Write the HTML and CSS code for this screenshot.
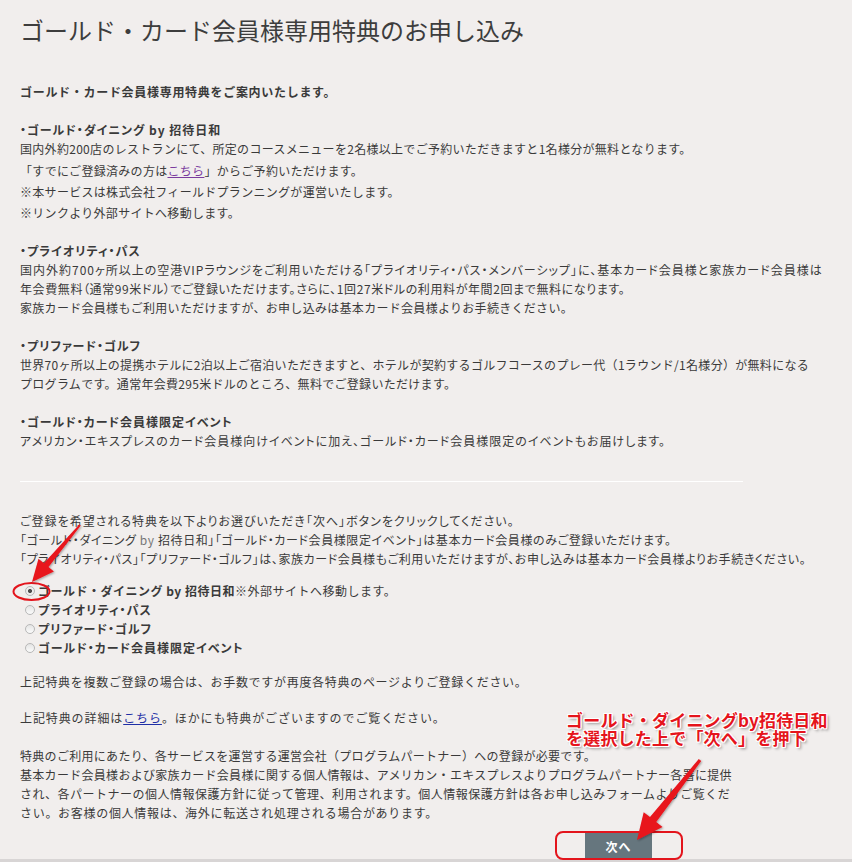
FILE: index.html
```html
<!DOCTYPE html>
<html lang="ja">
<head>
<meta charset="utf-8">
<title>ゴールド・カード会員様専用特典のお申し込み</title>
<link rel="stylesheet" href="styles.css">
</head>
<body>
<main class="page">
  <h1 class="title">ゴールド・カード会員様専用特典のお申し込み</h1>
  <p class="intro wide">ゴールド・カード会員様専用特典をご案内いたします。</p>

  <section class="benefit benefit-first">
    <h2 class="benefit-title">・ゴールド・ダイニング by 招待日和</h2>
    <p class="text">国内外約200店のレストランにて、所定のコースメニューを2名様以上でご予約いただきますと1名様分が無料となります。</p>
    <p class="text text-loose">「すでにご登録済みの方は<a class="link link-visited" href="#">こちら</a>」からご予約いただけます。<br>※本サービスは株式会社フィールドプランニングが運営いたします。<br>※リンクより外部サイトへ移動します。</p>
  </section>

  <section class="benefit benefit-second">
    <h2 class="benefit-title">・プライオリティ・パス</h2>
    <p class="text"><span class="tight-wide">国内外約700ヶ所以上の空港VIPラウンジをご利用いただける「プライオリティ・パス・メンバーシップ」に、基本カード会員様と家族カード会員様は</span><br><span class="tight">年会費無料（通常99米ドル）でご登録いただけます。さらに、1回27米ドルの利用料が年間2回まで無料になります。</span><br>家族カード会員様もご利用いただけますが、お申し込みは基本カード会員様よりお手続きください。</p>
  </section>

  <section class="benefit">
    <h2 class="benefit-title">・プリファード・ゴルフ</h2>
    <p class="text">世界70ヶ所以上の提携ホテルに2泊以上ご宿泊いただきますと、ホテルが契約するゴルフコースのプレー代（1ラウンド/1名様分）が無料になる<br>プログラムです。通常年会費295米ドルのところ、無料でご登録いただけます。</p>
  </section>

  <section class="benefit">
    <h2 class="benefit-title">・ゴールド・カード会員様限定イベント</h2>
    <p class="text tight-wide">アメリカン・エキスプレスのカード会員様向けイベントに加え、ゴールド・カード会員様限定のイベントもお届けします。</p>
  </section>

  <hr class="divider">

  <form class="apply">
    <p class="text guide"><span class="tight-wide">ご登録を希望される特典を以下よりお選びいただき「次へ」ボタンをクリックしてください。</span><br><span class="tight">「ゴールド・ダイニング <span class="faint">by</span> 招待日和」「ゴールド・カード会員様限定イベント」は基本カード会員様のみご登録いただけます。</span><br><span class="tight">「プライオリティ・パス」「プリファード・ゴルフ」は、家族カード会員様もご利用いただけますが、お申し込みは基本カード会員様よりお手続きください。</span></p>

    <ul class="options">
      <li class="option"><input class="radio" type="radio" name="benefit" id="b1" checked><label for="b1"><b>ゴールド・ダイニング by 招待日和</b>※外部サイトへ移動します。</label></li>
      <li class="option tight-wide"><input class="radio" type="radio" name="benefit" id="b2"><label for="b2"><b>プライオリティ・パス</b></label></li>
      <li class="option tight-wide"><input class="radio" type="radio" name="benefit" id="b3"><label for="b3"><b>プリファード・ゴルフ</b></label></li>
      <li class="option tight-wide"><input class="radio" type="radio" name="benefit" id="b4"><label for="b4"><b>ゴールド・カード会員様限定イベント</b></label></li>
    </ul>

    <p class="text note-first wide">上記特典を複数ご登録の場合は、お手数ですが再度各特典のページよりご登録ください。</p>
    <p class="text note-second wider">上記特典の詳細は<a class="link" href="#">こちら</a>。ほかにも特典がございますのでご覧ください。</p>
    <p class="text legal">特典のご利用にあたり、各サービスを運営する運営会社（プログラムパートナー）への登録が必要です。<br>基本カード会員様および家族カード会員様に関する個人情報は、アメリカン・エキスプレスよりプログラムパートナー各署に提供<br><span class="wide-soft">され、各パートナーの個人情報保護方針に従って管理、利用されます。個人情報保護方針は各お申し込みフォームよりご覧くだ</span><br><span class="wide">さい。お客様の個人情報は、海外に転送され処理される場合があります。</span></p>

    <div class="actions"><button class="next" type="button">次へ</button></div>
  </form>
</main>
<footer class="bottom-bar"></footer>

<div class="annotation">ゴールド・ダイニングby招待日和<br>を選択した上で「次へ」を押下</div>

<svg class="overlay" width="852" height="862" viewBox="0 0 852 862" aria-hidden="true">
  <defs>
    <filter id="shade" x="-20%" y="-20%" width="140%" height="140%">
      <feDropShadow dx="1" dy="1" stdDeviation="1" flood-color="#000" flood-opacity="0.35"/>
    </filter>
  </defs>
  <ellipse cx="31.5" cy="591.5" rx="18" ry="8.5" fill="none" stroke="#e3141c" stroke-width="2"/>
  <polygon filter="url(#shade)" fill="#e8141c" points="79.2,524.4 43.9,563.3 38.5,558.8 32,582 53.9,571.6 48.5,567.1 80.8,525.6"/>
  <rect x="556" y="832" width="126" height="27" rx="7" ry="7" fill="none" stroke="#e3141c" stroke-width="2"/>
  <polygon filter="url(#shade)" fill="#e8141c" points="698.8,759.1 650.0,817.1 643.7,812.2 637,840 662.5,827.0 656.2,822.1 701.2,760.9"/>
</svg>
</body>
</html>
```

FILE: styles.css
```css
html {
  background: #f1eeed;
}

body {
  margin: 0;
  position: relative;
  overflow: hidden;
  background: #f1eeed;
  color: #3a3a3a;
  font-family: "Noto Sans CJK JP", "Noto Sans", sans-serif;
  font-size: 12px;
  line-height: 19px;
  letter-spacing: 0.3px;
}

.page {
  padding-left: 20px;
}

.title {
  margin: 14px 0 0;
  font-size: 24px;
  line-height: 32px;
  font-weight: 400;
  letter-spacing: 0;
  color: #3d3d3d;
}

.intro {
  margin: 36px 0 0;
  font-weight: 700;
  white-space: nowrap;
}

.benefit {
  margin-top: 19px;
}

.benefit-second {
  margin-top: 18px;
}

.benefit-title {
  margin: 0;
  font-size: 12px;
  line-height: 19px;
  font-weight: 700;
  font-feature-settings: "palt" 1;
  letter-spacing: 1px;
}

.text {
  margin: 0;
  white-space: nowrap;
}

.text-loose {
  margin-top: 2px;
  line-height: 21px;
}

/* width tuning of lines with many brackets and middle dots */
.tight {
  font-feature-settings: "palt" 1;
  letter-spacing: 0.6px;
}

.tight-wide {
  font-feature-settings: "palt" 1;
  letter-spacing: 1px;
}

.wide {
  letter-spacing: 0.7px;
}

.wide-soft {
  letter-spacing: 0.5px;
}

.wider {
  letter-spacing: 0.9px;
}

.link {
  color: #1f2fa6;
  text-decoration: underline;
}

.link-visited {
  color: #7a3c9e;
}

.divider {
  margin: 31px 0 0;
  border: 0;
  height: 1px;
  width: 723px;
  background: #ffffff;
}

.guide {
  margin-top: 29px;
}

.faint {
  color: #777;
}

.options {
  list-style: none;
  margin: 13px 0 0;
  padding: 0;
}

.option {
  display: flex;
  align-items: center;
  height: 19px;
  white-space: nowrap;
  letter-spacing: 0.5px;
}

.option.tight-wide {
  letter-spacing: 1px;
}

.radio {
  appearance: none;
  -webkit-appearance: none;
  box-sizing: border-box;
  width: 10px;
  height: 10px;
  margin: 0 3px 0 5px;
  border: 1px solid #b7b7b7;
  border-radius: 50%;
  background: linear-gradient(#e4e4e4, #fbfbfb);
  flex: none;
}

.radio:checked {
  background: radial-gradient(circle, #4d4d4d 0 1.6px, #ececec 2.4px);
}

.note-first {
  margin-top: 15px;
}

.note-second {
  margin-top: 17px;
}

.legal {
  margin-top: 19px;
}

.actions {
  margin-top: 11px;
}

.next {
  display: block;
  margin-left: 565px;
  width: 67px;
  height: 26px;
  padding: 0;
  border: 0;
  background: #66767e;
  color: #ffffff;
  font-family: "Noto Sans CJK JP", sans-serif;
  font-size: 12px;
  font-weight: 700;
  letter-spacing: 1px;
}

.bottom-bar {
  height: 20px;
  background: #d8d5d5;
}

.annotation {
  position: absolute;
  left: 566px;
  top: 711px;
  color: #e5141c;
  font-size: 17px;
  line-height: 18px;
  font-weight: 700;
  letter-spacing: 0.2px;
  white-space: nowrap;
  text-shadow: -1px -1px 0 #fff, 1px -1px 0 #fff, -1px 1px 0 #fff, 1px 1px 0 #fff,
    0 -1px 0 #fff, 0 1px 0 #fff, -1px 0 0 #fff, 1px 0 0 #fff, 2px 2px 3px rgba(0, 0, 0, 0.45);
}

.overlay {
  position: absolute;
  left: 0;
  top: 0;
  pointer-events: none;
}
```
